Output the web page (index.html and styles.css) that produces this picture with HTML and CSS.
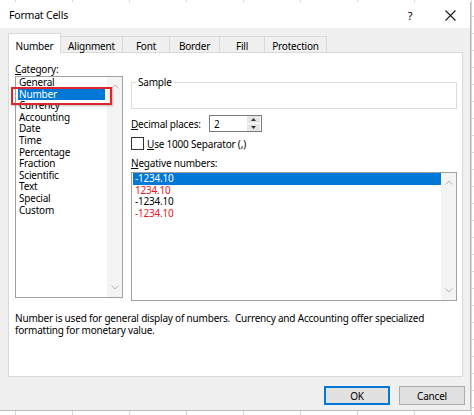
FILE: index.html
```html
<!DOCTYPE html>
<html>
<head>
<meta charset="utf-8">
<link rel="stylesheet" href="styles.css">
</head>
<body>
<div class="dialog">
  <div class="titlebar">
    <span class="title">Format Cells</span>
    <span class="help">?</span>
    <span class="close"><svg width="11" height="11" viewBox="0 0 11 11"><path d="M0.5 0.5 L10.5 10.5 M10.5 0.5 L0.5 10.5" stroke="#1a1a1a" stroke-width="1.1" fill="none"/></svg></span>
  </div>
  <div class="tabs">
    <div class="tab active t-number">Number</div>
    <div class="tab t-align">Alignment</div>
    <div class="tab t-font">Font</div>
    <div class="tab t-border">Border</div>
    <div class="tab t-fill">Fill</div>
    <div class="tab t-prot">Protection</div>
  </div>
  <div class="panel">
    <div class="cols">
      <div class="left">
        <div class="lbl"><u>C</u>ategory:</div>
        <div class="list catlist">
          <div class="items">
            <div class="item">General</div>
            <div class="item sel">Number</div>
            <div class="item">Currency</div>
            <div class="item">Accounting</div>
            <div class="item">Date</div>
            <div class="item">Time</div>
            <div class="item">Percentage</div>
            <div class="item">Fraction</div>
            <div class="item">Scientific</div>
            <div class="item">Text</div>
            <div class="item">Special</div>
            <div class="item">Custom</div>
          </div>
          <div class="scroll">
            <svg width="8" height="5" viewBox="0 0 8 5"><path d="M0.5 4.5 L4 1 L7.5 4.5" stroke="#b4b4b4" stroke-width="1" fill="none"/></svg>
            <svg width="8" height="5" viewBox="0 0 8 5"><path d="M0.5 0.5 L4 4 L7.5 0.5" stroke="#b4b4b4" stroke-width="1" fill="none"/></svg>
          </div>
          <div class="redbox"></div>
        </div>
      </div>
      <div class="right">
        <fieldset class="sample"><legend>Sample</legend></fieldset>
        <div class="decrow">
          <span class="declbl"><u>D</u>ecimal places:</span>
          <div class="spin">
            <span class="spinval">2</span>
            <div class="spinbtns">
              <div class="sb"><svg width="5" height="3" viewBox="0 0 5 3"><path d="M0 3 L2.5 0 L5 3 Z" fill="#333"/></svg></div>
              <div class="sb"><svg width="5" height="3" viewBox="0 0 5 3"><path d="M0 0 L2.5 3 L5 0 Z" fill="#333"/></svg></div>
            </div>
          </div>
        </div>
        <div class="chkrow">
          <span class="chk"></span>
          <span><u>U</u>se 1000 Separator (,)</span>
        </div>
        <div class="neglbl"><u>N</u>egative numbers:</div>
        <div class="list neglist">
          <div class="items">
            <div class="item sel">-1234.10</div>
            <div class="item red">1234.10</div>
            <div class="item">-1234.10</div>
            <div class="item red">-1234.10</div>
          </div>
          <div class="scroll">
            <svg width="8" height="5" viewBox="0 0 8 5"><path d="M0.5 4.5 L4 1 L7.5 4.5" stroke="#b4b4b4" stroke-width="1" fill="none"/></svg>
            <svg width="8" height="5" viewBox="0 0 8 5"><path d="M0.5 0.5 L4 4 L7.5 0.5" stroke="#b4b4b4" stroke-width="1" fill="none"/></svg>
          </div>
        </div>
      </div>
    </div>
    <div class="desc">Number is used for general display of numbers.&nbsp; Currency and Accounting offer specialized<br>formatting for monetary value.</div>
  </div>
  <div class="buttons">
    <div class="btn ok">OK</div>
    <div class="btn">Cancel</div>
  </div>
</div>
</body>
</html>
```
FILE: styles.css
```css
html, body {
  margin: 0;
  padding: 0;
}
body {
  width: 474px;
  height: 415px;
  overflow: hidden;
  background-color: #ffffff;
  background-image:
    repeating-linear-gradient(to right, transparent 0, transparent 15px, #d6d6d6 15px, #d6d6d6 16px, transparent 16px, transparent 57px),
    repeating-linear-gradient(to bottom, transparent 0, transparent 16px, #dcdcdc 16px, #dcdcdc 17px);
  font-family: "Noto Sans", "Open Sans", sans-serif;
  font-size: 10px;
  letter-spacing: -0.2px;
  color: #000;
}
.dialog {
  margin-top: 2px;
  width: 471px;
  height: 409px;
  box-sizing: border-box;
  background: #f0f0f0;
  border-right: 1px solid #b9b9b9;
  border-bottom: 1px solid #b9b9b9;
  display: flex;
  flex-direction: column;
}
.titlebar {
  height: 26px;
  flex: none;
  background: #fff;
  display: flex;
  align-items: center;
  padding-left: 9px;
}
.title {
  font-size: 10.5px;
  flex: 1;
}
.help {
  width: 40px;
  text-align: center;
  font-size: 11px;
}
.close {
  width: 40px;
  display: flex;
  justify-content: center;
  align-items: center;
}
.tabs {
  display: flex;
  align-items: flex-start;
  margin-top: 5px;
  padding-left: 8px;
  height: 19px;
  flex: none;
  position: relative;
  z-index: 1;
}
.tab {
  box-sizing: border-box;
  margin-top: 3px;
  height: 16px;
  padding-top: 2px;
  line-height: 14px;
  text-align: center;
  background: #f0f0f0;
  border: 1px solid #d9d9d9;
  border-bottom: none;
  border-left: none;
}
.tab.active {
  margin-top: 0;
  height: 20px;
  padding-top: 5px;
  background: #fff;
  border: 1px solid #d9d9d9;
  border-bottom: none;
}
.t-number { width: 53px; }
.t-align { width: 62px; }
.t-font { width: 47px; }
.t-border { width: 50px; }
.t-fill { width: 45px; }
.t-prot { width: 62px; }
.panel {
  margin: 0 7px 0 8px;
  height: 325px;
  box-sizing: border-box;
  flex: none;
  background: #fff;
  border: 1px solid #d9d9d9;
  padding: 9px 4px 0 6px;
}
.cols {
  display: grid;
  grid-template-columns: 108px 327px;
  column-gap: 8px;
  align-items: start;
}
.lbl {
  line-height: 14px;
}
.list {
  position: relative;
  box-sizing: border-box;
  border: 1px solid #a0a0a0;
  background: #fff;
  display: flex;
}
.catlist {
  height: 222px;
}
.items {
  flex: 1;
  padding: 0 2px;
  overflow: hidden;
}
.item {
  line-height: 11.6px;
  height: 11.6px;
  padding-left: 1px;
  white-space: nowrap;
}
.item.sel {
  background: #0078d7;
  color: #fff;
}
.item.red {
  color: #e8161e;
}
.scroll {
  width: 15px;
  flex: none;
  background: #f4f4f4;
  display: flex;
  flex-direction: column;
  justify-content: space-between;
  align-items: center;
  padding: 7px 0 7px;
}
.redbox {
  position: absolute;
  left: -5px;
  top: 10px;
  width: 101px;
  height: 18px;
  box-sizing: border-box;
  border: 2px solid #e0242c;
  box-shadow: 1px 1px 2px rgba(0,0,0,0.25);
}
.right {
  padding-top: 14px;
}
.sample {
  margin: 0;
  padding: 0;
  height: 33px;
  box-sizing: border-box;
  border: 1px solid #dcdcdc;
  width: 326px;
}
.sample legend {
  margin-left: 4px;
  padding: 0 2px;
  line-height: 12px;
}
.decrow {
  margin-top: 6px;
  height: 17px;
  display: flex;
  align-items: center;
}
.declbl {
  width: 78px;
}
.spin {
  width: 53px;
  height: 17px;
  box-sizing: border-box;
  border: 1px solid #7a7a7a;
  display: flex;
  align-items: center;
  padding-left: 4px;
}
.spinval {
  flex: 1;
}
.spinbtns {
  width: 13px;
  height: 15px;
  margin-right: 1px;
  display: flex;
  flex-direction: column;
  gap: 1px;
}
.sb {
  flex: 1;
  background: #e6e6e6;
  display: flex;
  align-items: center;
  justify-content: center;
}
.chkrow {
  margin-top: 5px;
  height: 13px;
  display: flex;
  align-items: center;
  gap: 3px;
}
.chk {
  width: 13px;
  height: 13px;
  box-sizing: border-box;
  border: 1px solid #333;
  background: #fff;
}
.neglbl {
  margin-top: 6px;
  line-height: 14px;
}
.neglist {
  margin-top: 2px;
  height: 129px;
  width: 326px;
}
.neglist .items {
  padding: 0 0 0 1px;
}
.neglist .item {
  padding-left: 2px;
}
.desc {
  margin-top: 11px;
  line-height: 12px;
}
.buttons {
  display: flex;
  justify-content: flex-end;
  gap: 9px;
  margin-top: 9px;
  padding-right: 5px;
}
.btn {
  width: 66px;
  height: 19px;
  box-sizing: border-box;
  background: #e1e1e1;
  border: 1px solid #adadad;
  display: flex;
  align-items: center;
  justify-content: center;
}
.btn.ok {
  border: 2px solid #0078d7;
}
```
